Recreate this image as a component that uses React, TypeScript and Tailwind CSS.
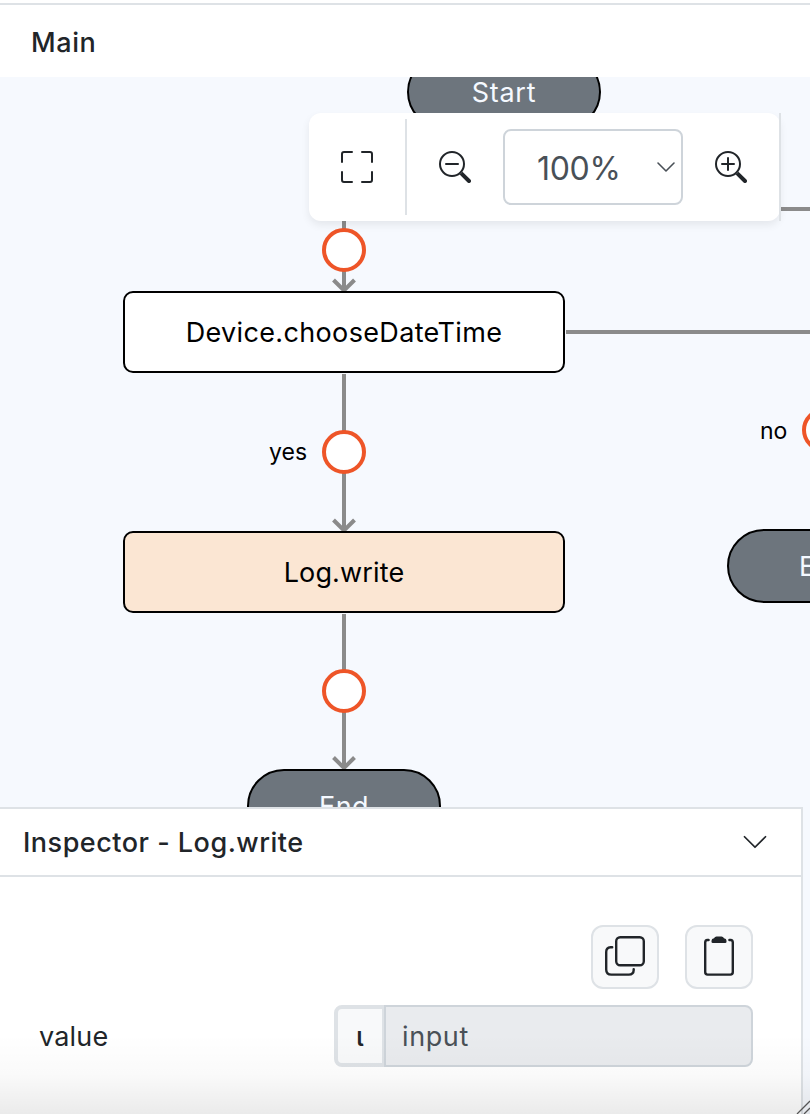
import type { ReactNode } from "react";
import { BsChevronDown, BsFullscreen, BsZoomIn, BsZoomOut } from "react-icons/bs";

function Handle({ className }: { className: string }) {
  return <div className={`absolute size-11 rounded-full border-4 border-[#ee5528] bg-white ${className}`} />;
}

function Pill({ className, children }: { className: string; children: ReactNode }) {
  return (
    <div
      className={`absolute flex h-[74px] w-[194px] items-center justify-center rounded-full border-2 border-black bg-[#6d757d] pt-0.5 text-[#f5f9ff] ${className}`}
    >
      {children}
    </div>
  );
}

function Step({ className, children }: { className: string; children: ReactNode }) {
  return (
    <div
      className={`absolute left-[123px] flex h-[82px] w-[442px] items-center justify-center rounded-[10px] border-2 border-black pt-0.5 text-black ${className}`}
    >
      {children}
    </div>
  );
}

function CopyIcon() {
  return (
    <svg className="size-10" viewBox="0 0 40 40" fill="none" stroke="#212529" strokeWidth="2.4" strokeLinecap="round">
      <rect x="11.200" y="1.200" width="27.600" height="28" rx="4" />
      <path d="M7.200 11.200H5.600Q1.200 11.400 1.200 16v17.400q0 5.200 5.200 5.200h17.400q4.800 0 4.900-4.600v-.9" />
    </svg>
  );
}

function ClipboardIcon() {
  return (
    <svg className="size-10" viewBox="0 0 40 40" fill="none" stroke="#212529" strokeWidth="2.4" strokeLinecap="round">
      <path d="M9.600 4H8.400Q6.200 4 6.200 6.600v29.400Q6.200 38.600 8.600 38.600h22.800q2.400 0 2.400-2.600V6.600Q33.800 4 31.600 4h-1.200" />
      <path
        d="M15 2.200q.8-1.700 2.500-1.700h5q1.700 0 2.500 1.700 2.500.3 2.500 2.600v1q0 1.200-1.300 1.200H13.800q-1.300 0-1.300-1.200v-1q0-2.300 2.500-2.600z"
        fill="#212529"
        stroke="none"
      />
    </svg>
  );
}

function Toolbar() {
  return (
    <div className="absolute top-9 left-[309px] flex h-[108px] w-[472px] items-center text-[#212529]">
      <div className="flex h-full w-[471px] items-center rounded-xl bg-white shadow-[0_4px_8px_rgba(0,0,0,0.075)]">
        <div className="flex h-24 w-[98px] items-center justify-center border-r-2 border-[#dee2e6]">
          <BsFullscreen size={32} />
        </div>
        <div className="flex w-24 items-center justify-center">
          <BsZoomOut size={32} />
        </div>
        <div className="flex h-[76px] w-[180px] items-center justify-between rounded-lg border-2 border-[#ced4da] pr-[3px] pl-8 text-[32px] tracking-[-0.3px] text-[#495057]">
          <span className="pt-[3px]">100%</span>
          <svg className="size-6" viewBox="0 0 24 24" fill="none" stroke="#495057" strokeWidth="1.6" strokeLinecap="round" strokeLinejoin="round">
            <path d="m4 8 8 8 8-8" />
          </svg>
        </div>
        <div className="flex w-24 items-center justify-center">
          <BsZoomIn size={32} />
        </div>
      </div>
      <div className="absolute top-0 right-0 h-full w-0.5 bg-[#dee2e6]" />
    </div>
  );
}

function Canvas() {
  return (
    <section className="relative h-[730px] overflow-hidden">
      <svg className="absolute top-0 left-0" width="810" height="730" fill="none" stroke="#8b8b8b" strokeWidth="4">
        <path d="M344 120v92M333.500 203 344 213.500 354.500 203" />
        <path d="M344 297v155M333.500 443 344 453.500 354.500 443" />
        <path d="M344 537v153M333.500 680.500 344 691l10.500-10.500" />
        <path d="M770 132h40M566 255h244" />
      </svg>
      <Pill className="top-[-22px] left-[407px] tracking-[0.7px]">Start</Pill>
      <Step className="top-[214px] bg-white">Device.chooseDateTime</Step>
      <Step className="top-[454px] bg-[#fbe6d3] tracking-[0.15px]">Log.write</Step>
      <Pill className="top-[692px] left-[247px]">End</Pill>
      <Pill className="top-[452px] left-[727px]">End</Pill>
      <Handle className="top-[151px] left-[322px]" />
      <Handle className="top-[353px] left-[322px]" />
      <Handle className="top-[592px] left-[322px]" />
      <Handle className="top-[331px] left-[802px]" />
      <span className="absolute top-[361px] left-[269px] text-[23px] leading-7 tracking-normal text-black">yes</span>
      <span className="absolute top-[340px] left-[760px] text-[23px] leading-7 tracking-normal text-black">no</span>
      <Toolbar />
    </section>
  );
}

function Inspector() {
  return (
    <section className="relative h-[307px]">
      <div className="h-full w-[803px] border-t-2 border-r-2 border-[#dee2e6] bg-white">
        <div className="flex h-[68px] items-center justify-between border-b-2 border-[#dee2e6] pr-8 pl-[23px]">
          <h2 className="pt-0.5 font-medium tracking-[0.5px]">Inspector - Log.write</h2>
          <BsChevronDown size={28} />
        </div>
        <div className="flex flex-col gap-4 pt-12 pr-12 pl-[39px]">
          <div className="flex justify-end gap-[26px]">
            <button className="flex h-16 w-[68px] items-start justify-center rounded-xl border-2 border-[#dee2e6] bg-[#f8f9fa] pt-[9px]">
              <CopyIcon />
            </button>
            <button className="flex h-16 w-[68px] items-start justify-center rounded-xl border-2 border-[#dee2e6] bg-[#f8f9fa] pt-[9px]">
              <ClipboardIcon />
            </button>
          </div>
          <div className="flex items-center justify-between">
            <label className="pt-0.5 tracking-[0.2px]">value</label>
            <div className="flex h-[62px] w-[419px]">
              <div className="flex w-[50px] items-center justify-center rounded-l-lg border-4 border-r-2 border-[#dee2e6] bg-[#f8f9fa] pt-0.5 font-medium">
                ι
              </div>
              <div className="flex flex-1 items-center rounded-r-lg border-2 border-[#ced4da] bg-[#e9ebee] pt-0.5 pl-4 tracking-[0.6px] text-[#495057]">
                input
              </div>
            </div>
          </div>
        </div>
      </div>
      <div className="pointer-events-none absolute inset-x-0 bottom-0 h-20 bg-linear-to-b from-black/0 via-black/2 to-black/8" />
      <svg className="absolute right-0 bottom-0" width="14" height="14" fill="none" stroke="#555" strokeWidth="1.3">
        <path d="M1 14 14 1M8 14l6-6" />
      </svg>
    </section>
  );
}

export default function App() {
  return (
    <main className="flex h-[1114px] w-[810px] flex-col overflow-hidden bg-[#f6f9fe] font-['Inter',sans-serif] text-[27px] tracking-[0.35px] text-[#212529]">
      <header className="h-[77px] bg-white pt-[3px]">
        <div className="flex h-[74px] items-center border-t-2 border-[#dee2e6] pt-[5px] pl-[31px]">
          <h1 className="font-medium tracking-[0.6px]">Main</h1>
        </div>
      </header>
      <Canvas />
      <Inspector />
    </main>
  );
}
